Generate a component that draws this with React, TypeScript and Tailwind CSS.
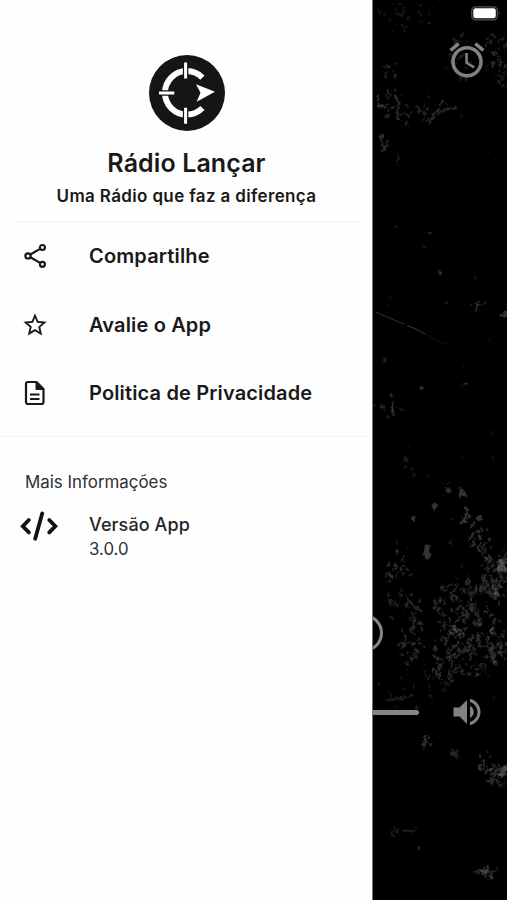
import type { ReactNode } from "react";
import { MdAlarm, MdStarBorder, MdVolumeUp } from "react-icons/md";

// Clusters of worn marks on the player's background: x, y, radius x, radius y, count, opacity
const clusters = [
  [30, 14, 30, 16, 26, 0.1],
  [85, 48, 14, 30, 22, 0.13],
  [125, 55, 14, 26, 34, 0.17],
  [16, 66, 9, 10, 10, 0.18],
  [18, 100, 12, 18, 14, 0.16],
  [50, 108, 22, 18, 18, 0.15],
  [106, 303, 8, 7, 9, 0.2],
  [18, 408, 20, 12, 8, 0.15],
  [32, 462, 10, 20, 6, 0.12],
  [98, 517, 8, 12, 8, 0.22],
  [24, 568, 20, 28, 20, 0.2],
  [108, 544, 14, 18, 24, 0.2],
  [124, 573, 17, 28, 75, 0.18],
  [96, 610, 34, 36, 120, 0.18],
  [94, 650, 34, 32, 105, 0.18],
  [38, 646, 14, 26, 26, 0.18],
  [124, 650, 12, 26, 26, 0.18],
  [70, 668, 16, 18, 24, 0.18],
  [30, 612, 22, 24, 20, 0.16],
  [56, 743, 9, 10, 12, 0.2],
  [84, 755, 6, 12, 6, 0.18],
  [112, 764, 9, 12, 14, 0.2],
  [126, 776, 11, 14, 34, 0.18],
  [28, 832, 18, 3, 6, 0.12],
  [118, 874, 9, 7, 16, 0.2],
  [70, 300, 70, 300, 26, 0.09],
  [70, 690, 65, 30, 26, 0.11],
];

const marks = clusters.map(([cx, cy, rx, ry, count, opacity], index) => {
  let seed = index * 7919 + 17;
  const random = () => {
    seed = (seed * 16807) % 2147483647;
    return seed / 2147483647;
  };
  for (let i = 0; i < 5; i++) random();
  let thin = "";
  let thick = "";
  for (let i = 0; i < count; i++) {
    const angle = random() * Math.PI * 2;
    const distance = Math.pow(random(), 0.65);
    const x = cx + Math.cos(angle) * rx * distance;
    const y = cy + Math.sin(angle) * ry * distance;
    const length = 0.5 + random() * random() * 2.2;
    const piece =
      `M${x.toFixed(1)} ${y.toFixed(1)}` +
      `l${((random() * 3 - 1.5) * length).toFixed(1)} ${((random() * 4 - 1) * length).toFixed(1)}` +
      `l${((random() * 4 - 2) * length).toFixed(1)} ${((random() * 3 - 1.5) * length).toFixed(1)}`;
    if (i % 3 === 0) thick += piece;
    else thin += piece;
  }
  return { thin, thick, opacity };
});

const Texture = () => (
  <svg viewBox="0 0 135 900" className="absolute inset-0 h-full w-full" fill="none" stroke="#fff" strokeLinecap="round">
    <defs>
      <filter id="worn" x="0" y="0" width="135" height="900" filterUnits="userSpaceOnUse">
        <feTurbulence type="fractalNoise" baseFrequency="0.22" numOctaves="2" seed="4" />
        <feDisplacementMap in="SourceGraphic" scale="6" xChannelSelector="R" yChannelSelector="G" />
        <feGaussianBlur stdDeviation="0.55" />
      </filter>
    </defs>
    <g filter="url(#worn)">
      {marks.map((mark, i) => (
        <g key={i} opacity={mark.opacity}>
          <path d={mark.thin} strokeWidth="1.3" />
          <path d={mark.thick} strokeWidth="2.2" />
        </g>
      ))}
      <g opacity="0.19">
        <path d="M56 122l5-9 6-8 3-7M60 112l11-4 12-3" strokeWidth="1.6" />
        <path d="M8 149l4-3 4-8M8 133q1 13 5 15M5 93q0 12 6 11l4-2M22 94q6 5 3 13t2 10" strokeWidth="1.8" />
        <path d="M19 404l2 11M34 600l6 6 9 6M74 589l6-5M78 594l8 7" strokeWidth="1.8" />
        <path d="M12 702l14-2 13-2M25 153v10M30 833l12 1" strokeWidth="1.2" />
        <path d="M102 875h14M46 850v2M56 232h3M67 269l1 3" strokeWidth="2" />
      </g>
      <g fill="#fff" stroke="none" opacity="0.2">
        <path d="M51 547q3-3 6-1l1 10q-1 5-5 4l-3-5zM86 490q5-2 7 4l2 5-7-2zM59 505l4-2 2 5-4 2zM72 487l5 1 3 5-5-1zM38 519l4-4 1 5-4 2z" />
        <path d="M103 518l7-3 1 4-6 2zM125 563l10-7v18l-9-2zM125 778l10-12v11l-9 4zM129 313l6-3v6l-7-1z" />
        <path d="M46 387l3-2 2 4-3 1zM90 383l3-2 2 4zM16 395l2-3 3 4zM9 361l2-3 2 3z" />
      </g>
    </g>
    <path d="M3 311l16 7 12 5M35 325l8 3 9 5" strokeWidth="1.2" opacity="0.17" />
    <path d="M52 333l16 8M69 342l6 1" strokeWidth="1" opacity="0.07" />
  </svg>
);

const Logo = () => (
  <svg width="76" height="76" viewBox="0 0 76 76" fill="none">
    <circle cx="38" cy="38" r="38" fill="#151515" />
    <path d="M53.4 22.6A21.8 21.8 0 1 0 53.4 53" stroke="#fff" strokeWidth="6" />
    <path d="M36.6 7v18M36.6 51.5v17M9 38h17.5" stroke="#151515" strokeWidth="5.5" />
    <path d="M36.6 7.5v16M36.6 52.7v16M10 38h15.3" stroke="#fff" strokeWidth="3" />
    <path d="M47 29.2l19 7.6-18.3 9.9 3.8-9z" fill="#fff" />
  </svg>
);

const ShareIcon = () => (
  <svg width="26" height="26" viewBox="0 0 26 26" fill="none" stroke="#181818" strokeWidth="2.2">
    <circle cx="5" cy="12.9" r="2.6" />
    <circle cx="19.4" cy="4.5" r="2.5" />
    <circle cx="19.4" cy="21.3" r="2.5" />
    <path d="M7.3 11.5l9.8-5.6M7.3 14.3l9.8 5.6" />
  </svg>
);

const DocumentIcon = () => (
  <svg width="22" height="26" viewBox="0 0 22 26" fill="none" stroke="#181818" strokeWidth="2.2" strokeLinejoin="round">
    <path d="M4 2h8.5L19.5 9v13a2 2 0 0 1-2 2H4a2 2 0 0 1-2-2V4a2 2 0 0 1 2-2z" />
    <path d="M12 2v7.5h7.5z" fill="#181818" strokeWidth="1" />
    <path d="M6 14.5h9.5M6 19h9.5" strokeWidth="2" />
  </svg>
);

const CodeIcon = () => (
  <svg width="38" height="30" viewBox="0 0 38 30" fill="none" stroke="#111" strokeWidth="3.8" strokeLinecap="round">
    <path d="M8.8 9L2.8 15.2l6 6.2M29.3 9l6 6.2-6 6.2M22.2 2.5L15.2 27.7" />
  </svg>
);

const MenuItem = ({ icon, label }: { icon: ReactNode; label: string }) => (
  <button className="flex h-[68.5px] w-full items-center text-left">
    <span className="flex w-[89px] shrink-0 pl-[21px]">{icon}</span>
    <span className="text-[20px] leading-[20px] font-semibold tracking-[0.15px] whitespace-nowrap">{label}</span>
  </button>
);

const Drawer = () => (
  <aside className="flex w-[372px] shrink-0 flex-col bg-[#fefefe] text-[#191919]">
    <header className="mr-[11px] ml-[12px] flex h-[222px] flex-col items-center border-b border-[#f2f2f2] pt-[55px]">
      <Logo />
      <h1 className="mt-[17px] text-[25px] leading-[30px] font-semibold tracking-[0.1px] whitespace-nowrap">Rádio Lançar</h1>
      <p className="mt-[7px] text-[17px] leading-[22px] font-semibold tracking-[0.35px] whitespace-nowrap">Uma Rádio que faz a diferença</p>
    </header>
    <nav className="mr-[4px] h-[215px] border-b border-[#f2f2f2]">
      <MenuItem icon={<span className="pl-[2px]"><ShareIcon /></span>} label="Compartilhe" />
      <MenuItem icon={<MdStarBorder size={28} />} label="Avalie o App" />
      <MenuItem icon={<span className="pl-[3px]"><DocumentIcon /></span>} label="Politica de Privacidade" />
    </nav>
    <section className="pt-[34px]">
      <h2 className="pl-[25px] text-[16.9px] leading-[22px] text-[#303030]">Mais Informações</h2>
      <div className="mt-[18px] flex">
        <span className="w-[89px] shrink-0 pl-[20px]">
          <CodeIcon />
        </span>
        <div className="pt-[2px]">
          <p className="text-[18px] leading-[24px] font-medium tracking-[0.1px] text-[#252525]">Versão App</p>
          <p className="text-[16.8px] leading-[25px] text-[#303030]">3.0.0</p>
        </div>
      </div>
    </section>
  </aside>
);

const Player = () => (
  <main className="relative w-[135px] overflow-hidden border-l border-[#777] bg-black">
    <Texture />
    <div className="relative flex h-full flex-col text-[#818181]">
      <div className="flex h-[39px] justify-end pt-[6px] pr-[6px]">
        <svg width="30" height="15" viewBox="0 0 30 15" fill="none">
          <rect x=".8" y=".8" width="25.5" height="13" rx="3.8" stroke="#555" strokeWidth="1.3" />
          <rect x="2.3" y="2.3" width="22.5" height="10" rx="2.3" fill="#fff" />
          <path d="M27.8 5.3q2 2 0 4z" fill="#555" />
        </svg>
      </div>
      <MdAlarm size={42} className="ml-[73px]" />
      <div className="mt-[533px] -ml-[28px] h-[38px] w-[38px] rounded-full border-[3px] border-[#858585]" />
      <div className="mt-[42px] flex items-center">
        <div className="h-[5px] w-[46px] rounded-r-full bg-[#858585]" />
        <MdVolumeUp size={36} className="ml-[30px]" />
      </div>
    </div>
  </main>
);

export default function App() {
  return (
    <div className="flex h-[900px] w-[507px] overflow-hidden bg-black font-['Inter','Liberation_Sans',sans-serif]">
      <Drawer />
      <Player />
    </div>
  );
}
